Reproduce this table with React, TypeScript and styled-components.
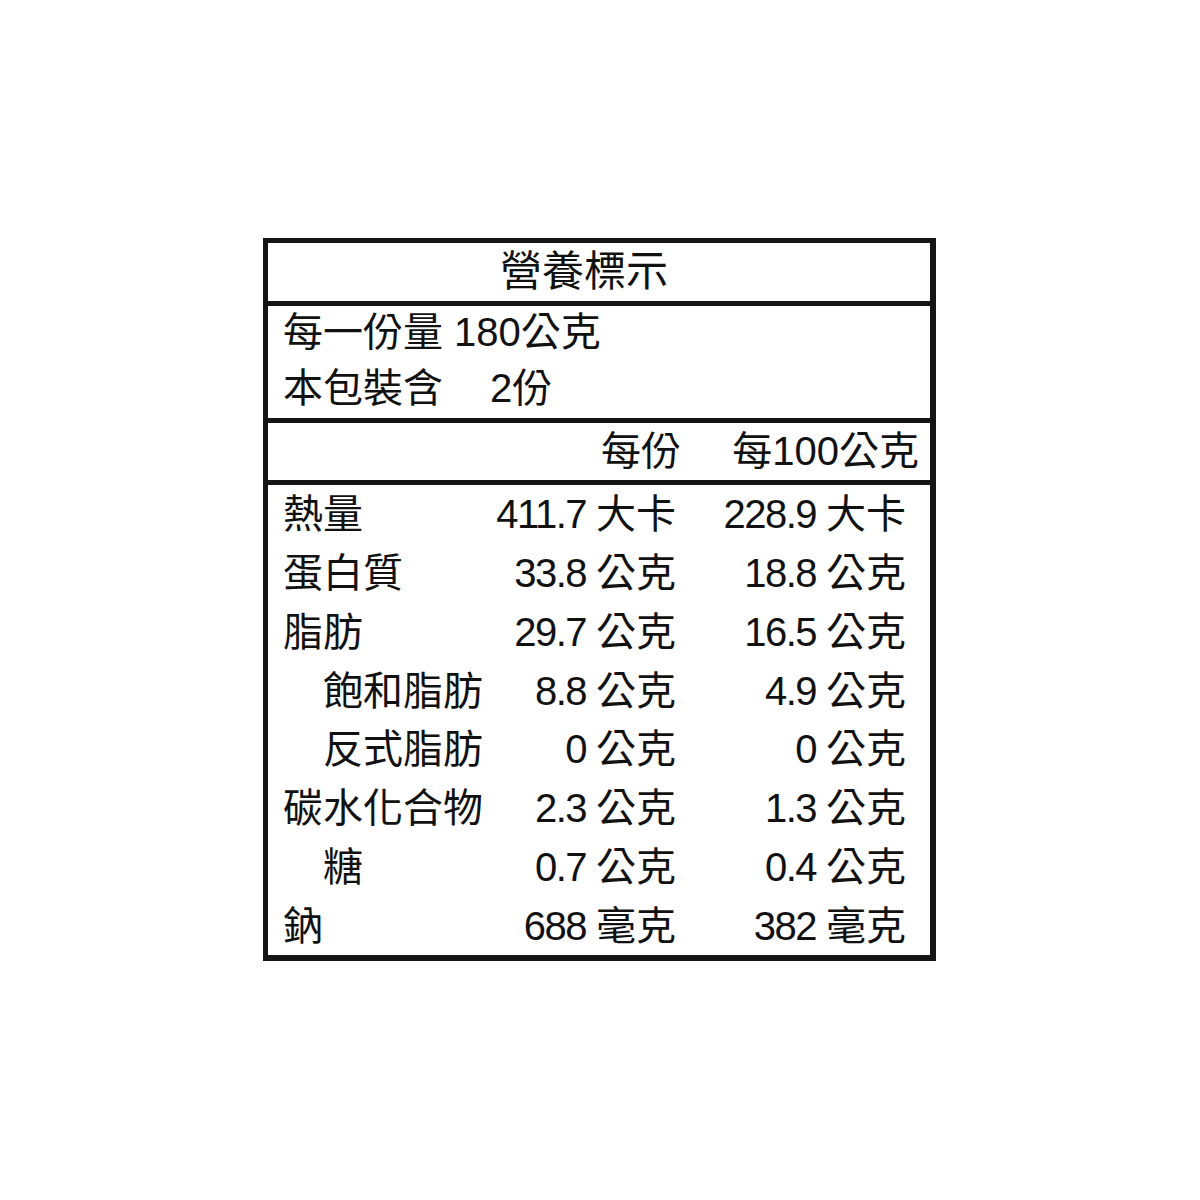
import React from 'react'
import styled, { createGlobalStyle } from 'styled-components'

const GlobalStyle = createGlobalStyle`
  html, body {
    margin: 0;
    background: #ffffff;
  }

  body {
    font-family: "Liberation Sans", "Noto Sans CJK TC", sans-serif;
    color: #111111;
  }
`

const Page = styled.div`
  padding: 238px 0 0 263px;
`

const Label = styled.div`
  width: 673px;
  border: 5px solid #151515;
  border-right-width: 6px;
  border-bottom-width: 6px;
  box-sizing: border-box;
  display: flex;
  flex-direction: column;
`

const Section = styled.div`
  border-top: 5px solid #151515;

  &:first-child {
    border-top: none;
  }
`

const Title = styled(Section)`
  height: 58px;
  line-height: 58px;
  font-size: 42px;
  text-align: center;
  padding-right: 30px;
`

const Serving = styled(Section)`
  height: 112px;
  padding-left: 15px;
  display: flex;
  flex-direction: column;
  gap: 4px;
`

const ServingLine = styled.div`
  font-size: 40px;
  line-height: 52px;
  white-space: nowrap;
`

const Gap = styled.span<{ $width: number }>`
  display: inline-block;
  width: ${(p) => p.$width}px;
`

const Header = styled(Section)`
  height: 57px;
  display: grid;
  grid-template-columns: 1fr 190px 238px;
  align-items: center;
  padding-right: 11px;
  font-size: 40px;
  line-height: 57px;
  text-align: right;
  white-space: nowrap;
`

const Body = styled(Section)`
  height: 470px;
  display: flex;
  flex-direction: column;
  padding: 0 24px 0 15px;
`

const Row = styled.div`
  flex: 1;
  display: grid;
  grid-template-columns: 1fr 190px 230px;
  align-items: center;
  font-size: 40px;
  line-height: 40px;
  white-space: nowrap;
`

const Name = styled.div<{ $indent?: boolean }>`
  padding-left: ${(p) => (p.$indent ? '40px' : '0')};
`

const Value = styled.div`
  text-align: right;
`

const Num = styled.span`
  letter-spacing: -1.5px;
`

const Unit = styled.span`
  margin-left: 10px;
`

type Nutrient = {
  name: string
  indent?: boolean
  perServing: string
  per100: string
  unit: string
}

const nutrients: Nutrient[] = [
  { name: '熱量', perServing: '411.7', per100: '228.9', unit: '大卡' },
  { name: '蛋白質', perServing: '33.8', per100: '18.8', unit: '公克' },
  { name: '脂肪', perServing: '29.7', per100: '16.5', unit: '公克' },
  { name: '飽和脂肪', indent: true, perServing: '8.8', per100: '4.9', unit: '公克' },
  { name: '反式脂肪', indent: true, perServing: '0', per100: '0', unit: '公克' },
  { name: '碳水化合物', perServing: '2.3', per100: '1.3', unit: '公克' },
  { name: '糖', indent: true, perServing: '0.7', per100: '0.4', unit: '公克' },
  { name: '鈉', perServing: '688', per100: '382', unit: '毫克' },
]

export default function App(): React.ReactElement {
  return (
    <>
      <GlobalStyle />
      <Page>
        <Label>
          <Title>營養標示</Title>
          <Serving>
            <ServingLine>每一份量 180公克</ServingLine>
            <ServingLine>
              本包裝含<Gap $width={47} />2份
            </ServingLine>
          </Serving>
          <Header>
            <span />
            <span>每份</span>
            <span>每100公克</span>
          </Header>
          <Body>
            {nutrients.map((n) => (
              <Row key={n.name}>
                <Name $indent={n.indent}>{n.name}</Name>
                <Value>
                  <Num>{n.perServing}</Num>
                  <Unit>{n.unit}</Unit>
                </Value>
                <Value>
                  <Num>{n.per100}</Num>
                  <Unit>{n.unit}</Unit>
                </Value>
              </Row>
            ))}
          </Body>
        </Label>
      </Page>
    </>
  )
}
